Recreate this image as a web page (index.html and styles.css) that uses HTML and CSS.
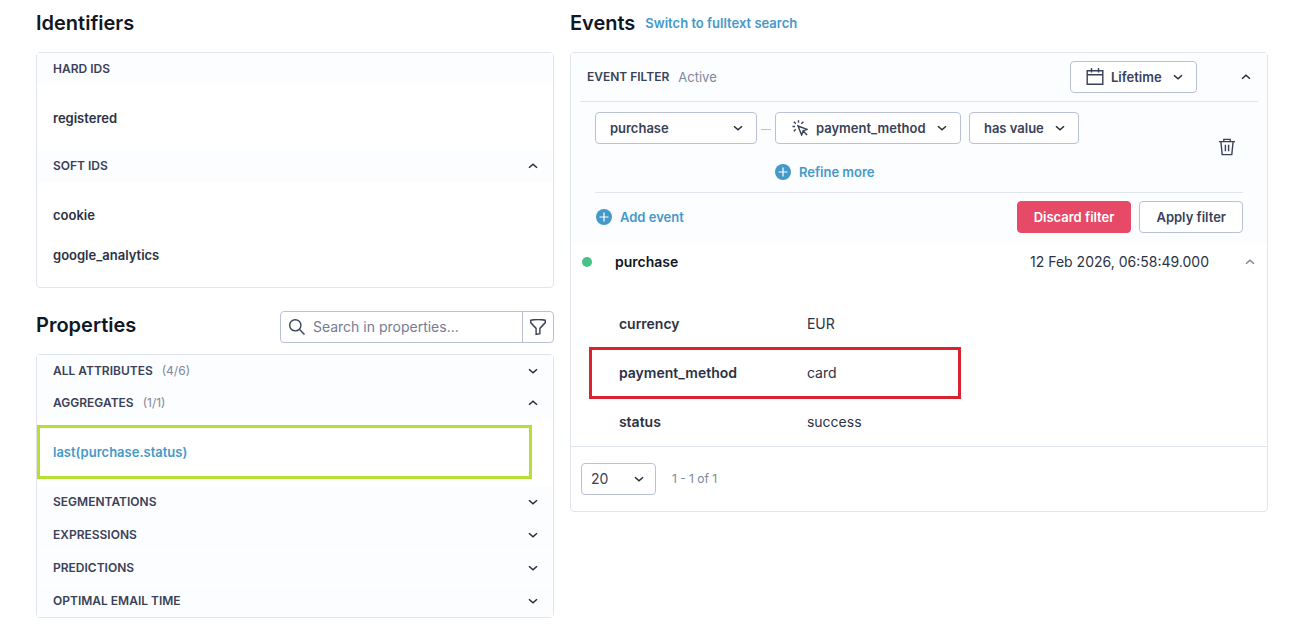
FILE: index.html
```
<!DOCTYPE html>
<html lang="en">

<head>
  <meta charset="UTF-8">
  <meta name="viewport" content="width=device-width, initial-scale=1.0">
  <title>Customer profile</title>
  <link rel="stylesheet" href="styles.css">
</head>

<body>
  <!-- shared icons -->
  <svg class="sprite" aria-hidden="true">
    <symbol id="down" viewBox="0 0 10 10"><path d="M1 3.2 5 6.8l4-3.6" /></symbol>
    <symbol id="up" viewBox="0 0 10 10"><path d="M1 6.8 5 3.2l4 3.6" /></symbol>
    <symbol id="plus" viewBox="0 0 16 16">
      <circle cx="8" cy="8" r="8" fill="#4599c9" stroke="none" />
      <path d="M8 3.5v9M3.5 8h9" stroke="#fff" />
    </symbol>
  </svg>

  <main>
    <div class="column">
      <div class="heading">
        <h2>Identifiers</h2>
      </div>
      <section class="panel">
        <div class="group open">
          <h3>HARD IDS</h3>
          <ul>
            <li>registered</li>
          </ul>
        </div>
        <div class="group open">
          <h3>SOFT IDS
            <button class="toggle" aria-label="Collapse soft IDs"><svg class="chevron"><use href="#up" /></svg></button>
          </h3>
          <ul>
            <li>cookie</li>
            <li>google_analytics</li>
          </ul>
        </div>
      </section>

      <div class="heading properties-heading">
        <h2>Properties</h2>
        <div class="search">
          <svg viewBox="0 0 16 16"><circle cx="6.3" cy="6.3" r="5.6" /><path d="m10.3 10.3 5.2 5.2" /></svg>
          <input type="text" aria-label="Search in properties" placeholder="Search in properties...">
          <button aria-label="Filter properties">
            <svg viewBox="0 0 16 16"><path d="M.7 1.2Q8-.3 15.3 1.2V3.6L9.9 9.4V14.6L6.1 15.4V9.4L.7 3.6Z" /></svg>
          </button>
        </div>
      </div>
      <section class="panel">
        <div class="group">
          <h3>ALL ATTRIBUTES <span class="count">(4/6)</span>
            <button class="toggle" aria-label="Expand all attributes"><svg class="chevron"><use href="#down" /></svg></button>
          </h3>
        </div>
        <div class="group open">
          <h3>AGGREGATES <span class="count">(1/1)</span>
            <button class="toggle" aria-label="Collapse aggregates"><svg class="chevron"><use href="#up" /></svg></button>
          </h3>
          <ul class="marked-green">
            <li><a href="#">last(purchase.status)</a></li>
          </ul>
        </div>
        <div class="group">
          <h3>SEGMENTATIONS
            <button class="toggle" aria-label="Expand segmentations"><svg class="chevron"><use href="#down" /></svg></button>
          </h3>
        </div>
        <div class="group">
          <h3>EXPRESSIONS
            <button class="toggle" aria-label="Expand expressions"><svg class="chevron"><use href="#down" /></svg></button>
          </h3>
        </div>
        <div class="group">
          <h3>PREDICTIONS
            <button class="toggle" aria-label="Expand predictions"><svg class="chevron"><use href="#down" /></svg></button>
          </h3>
        </div>
        <div class="group">
          <h3>OPTIMAL EMAIL TIME
            <button class="toggle" aria-label="Expand optimal email time"><svg class="chevron"><use href="#down" /></svg></button>
          </h3>
        </div>
      </section>
    </div>

    <div class="column">
      <div class="heading">
        <h2>Events</h2>
        <a href="#">Switch to fulltext search</a>
      </div>
      <section class="panel">
        <div class="filter">
          <div class="filter-top">
            <h3>EVENT FILTER</h3>
            <span class="state">Active</span>
            <span class="dropdown lifetime">
              <svg class="lead" viewBox="0 0 18 18"><path d="M1.2 2.7h15.6v13.6H1.2zM1.2 6.7h15.6M5.5 0v4.5M12.5 0v4.5" /></svg>
              <select aria-label="Time range"><option>Lifetime</option></select>
              <svg class="chevron"><use href="#down" /></svg>
            </span>
            <button class="toggle" aria-label="Collapse filter"><svg class="chevron"><use href="#up" /></svg></button>
          </div>

          <div class="filter-body">
            <div class="condition">
              <span class="dropdown event">
                <select aria-label="Event"><option>purchase</option></select>
                <svg class="chevron"><use href="#down" /></svg>
              </span>
              <span class="dash"></span>
              <div class="refine">
                <div class="refine-row">
                  <span class="dropdown attribute">
                    <svg class="lead" viewBox="0 0 16 16"><path d="M6 6l9 3.3-3.8 1.6L9.6 15zM11.2 11l3.9 3.9M.5 6.5H3M1.8 1.8l2 2M6.5.3v2.5M11.3 1.8l-2 2M1.8 11.2l2-2" /></svg>
                    <select aria-label="Attribute"><option>payment_method</option></select>
                    <svg class="chevron"><use href="#down" /></svg>
                  </span>
                  <span class="dropdown operator">
                    <select aria-label="Operator"><option>has value</option></select>
                    <svg class="chevron"><use href="#down" /></svg>
                  </span>
                </div>
                <button class="add"><svg><use href="#plus" /></svg>Refine more</button>
              </div>
              <button class="trash" aria-label="Delete condition">
                <svg viewBox="0 0 18 18"><path d="M1 3.6h16M5.8 3.3V1.4h6.4v1.9M2.9 3.8 4.2 16.6h9.6l1.3-12.8M7.4 6.8v6.4M10.6 6.8v6.4" /></svg>
              </button>
            </div>
            <div class="actions">
              <button class="add"><svg><use href="#plus" /></svg>Add event</button>
              <button class="btn danger">Discard filter</button>
              <button class="btn">Apply filter</button>
            </div>
          </div>
        </div>

        <div class="event-head">
          <span class="dot"></span>
          <strong>purchase</strong>
          <time>12 Feb 2026, 06:58:49.000</time>
          <button class="toggle" aria-label="Collapse event"><svg class="chevron"><use href="#up" /></svg></button>
        </div>
        <dl>
          <div>
            <dt>currency</dt>
            <dd>EUR</dd>
          </div>
          <div class="marked-red">
            <dt>payment_method</dt>
            <dd>card</dd>
          </div>
          <div>
            <dt>status</dt>
            <dd>success</dd>
          </div>
        </dl>

        <div class="pagination">
          <span class="dropdown page-size">
            <select aria-label="Events per page"><option>20</option></select>
            <svg class="chevron"><use href="#down" /></svg>
          </span>
          <span class="range">1 - 1 of 1</span>
        </div>
      </section>
    </div>
  </main>
</body>

</html>
```
FILE: styles.css
```
*,
*::after {
  box-sizing: border-box;
  margin: 0;
  padding: 0;
}

body {
  background: #fff;
  color: #2b3245;
  font-family: Inter, sans-serif;
  font-size: 13px;
  line-height: 20px;
}

button, input, select {
  font: inherit;
  color: inherit;
  background: none;
  border: none;
}

button {
  cursor: pointer;
}

svg {
  fill: none;
  stroke: #3a4157;
  stroke-width: 1.4;
  flex: none;
}

.sprite {
  display: none;
}

a {
  color: #4599c9;
  font-weight: 600;
  text-decoration: none;
}

ul {
  list-style: none;
}

main {
  display: grid;
  grid-template-columns: 23fr 31fr;
  gap: 16px;
  padding: 0 21px 15px 36px;
}

.column {
  min-width: 0;
}

.heading {
  display: flex;
  align-items: center;
  gap: 10px;
  height: 32px;
  margin: 7px 0 13px;
}

h2 {
  color: #0f1724;
  font-size: 20px;
  font-weight: 600;
  line-height: 28px;
}

h3 {
  color: #3a4157;
  font-size: 12px;
  font-weight: 600;
}

.panel {
  border: 1px solid #e0e4ee;
  border-radius: 4px;
}

.group h3 {
  display: flex;
  align-items: center;
  height: 32px;
  padding: 0 15px 0 16px;
  background: #fcfdff;
}

.group + .group:not(.open) {
  border-top: 1px solid #fff;
}

.group.open + .group:not(.open) {
  border-top-width: 2px;
}

.count {
  margin-left: 9px;
  color: #80869c;
  font-weight: 400;
}

.toggle {
  display: flex;
  margin-left: auto;
}

.chevron {
  width: 10px;
  height: 10px;
  stroke: #262c3d;
  stroke-width: 1.5;
}

.group ul {
  position: relative;
  padding: 13px 16px 12px;
}

.group li {
  height: 40px;
  font-weight: 600;
  line-height: 40px;
}

.marked-green::after {
  content: "";
  position: absolute;
  inset: 6px 21px 5px 0;
  border: 3px solid #b5e033;
}

/* search box */
.properties-heading {
  align-items: flex-start;
  justify-content: space-between;
  margin: 23px 0 11px;
}

.search {
  display: flex;
  align-items: center;
  width: 274px;
  height: 32px;
  padding-left: 8px;
  background: #fff;
  border: 1px solid #bbc1d5;
  border-radius: 4px;
}

.search svg {
  width: 16px;
  height: 16px;
}

.search input {
  flex: 1;
  min-width: 0;
  margin-left: 8px;
  font-size: 14px;
  outline: none;
}

.search input::placeholder {
  color: #757c94;
}

.search button {
  display: flex;
  align-items: center;
  justify-content: center;
  width: 31px;
  height: 30px;
  border-left: 1px solid #bbc1d5;
}

/* event filter */
.filter {
  padding: 0 9px 10px;
  background: #fcfdff;
}

.filter-top {
  display: flex;
  align-items: center;
  height: 49px;
  padding: 0 7px;
  border-bottom: 1px solid #e0e4ee;
}

.state {
  margin-left: 9px;
  color: #80869c;
}

.filter-body {
  padding: 10px 15px 0;
}

.dropdown {
  position: relative;
  display: block;
  color: #3a4157;
  font-weight: 600;
}

.dropdown select {
  display: block;
  width: 100%;
  height: 32px;
  padding: 0 32px 0 14px;
  background: #fff;
  border: 1px solid #bbc1d5;
  border-radius: 4px;
  appearance: none;
}

.dropdown svg {
  position: absolute;
  pointer-events: none;
}

.dropdown .chevron {
  top: 11px;
  right: 14px;
}

.dropdown .lead {
  top: 7px;
  left: 16px;
  width: 18px;
  height: 18px;
}

.dropdown.lifetime {
  width: 127px;
  margin-left: auto;
}

.lifetime + .toggle {
  margin-left: 44px;
}

.dropdown.attribute .lead {
  top: 8px;
  left: 17px;
  width: 16px;
  height: 16px;
}

.lifetime select,
.attribute select {
  padding-left: 40px;
}

.event {
  width: 162px;
}

.attribute {
  width: 186px;
}

.operator {
  width: 110px;
}

.condition {
  display: flex;
  align-items: flex-start;
  padding-bottom: 10px;
  border-bottom: 1px solid #e0e4ee;
}

.dash {
  width: 10px;
  height: 1px;
  margin: 17px 4px 0;
  background: #bbc1d5;
}

.refine-row {
  display: flex;
  gap: 8px;
  margin-bottom: 18px;
}

.add {
  display: flex;
  align-items: center;
  gap: 8px;
  color: #4599c9;
  font-weight: 600;
}

.add svg {
  width: 16px;
  height: 16px;
  stroke-width: 1.2;
}

.trash {
  align-self: center;
  margin-left: auto;
  padding-right: 7px;
}

.trash svg {
  display: block;
  width: 18px;
  height: 18px;
}

.actions {
  display: flex;
  gap: 8px;
  padding-top: 8px;
}

.actions .add {
  margin-right: auto;
  padding-left: 1px;
}

.btn {
  height: 32px;
  padding: 0 16px;
  color: #3a4157;
  font-weight: 600;
  background: #fff;
  border: 1px solid #bbc1d5;
  border-radius: 4px;
}

.btn.danger {
  color: #fff;
  background: #e64a67;
  border-color: #e64a67;
}

/* event row */
.event-head {
  display: flex;
  align-items: center;
  height: 37px;
  padding: 0 12px 0 11px;
  font-size: 14px;
}

.dot {
  width: 10px;
  height: 10px;
  margin-right: 23px;
  background: #46c284;
  border-radius: 50%;
}

.event-head strong {
  color: #0f1724;
  font-size: 14px;
  font-weight: 600;
}

.event-head time {
  margin-left: auto;
}

.event-head .toggle {
  margin-left: 36px;
}

.event-head .chevron {
  stroke: #80869c;
}

dl {
  padding-top: 19px;
  font-size: 14px;
}

dl div {
  position: relative;
  display: flex;
  align-items: center;
  height: 49px;
  padding-left: 48px;
}

dt {
  width: 188px;
  font-weight: 600;
}

.marked-red::after {
  content: "";
  position: absolute;
  inset: -1px auto -2px 18px;
  width: 372px;
  border: 3px solid #d9232e;
}

.pagination {
  display: flex;
  align-items: center;
  gap: 16px;
  padding: 16px 10px;
  border-top: 1px solid #e0e4ee;
}

.page-size {
  width: 75px;
  font-size: 14px;
  font-weight: 400;
}

.page-size select {
  padding-left: 9px;
}

.page-size .chevron {
  right: 12px;
}

.range {
  color: #80869c;
  font-size: 12px;
}
```
